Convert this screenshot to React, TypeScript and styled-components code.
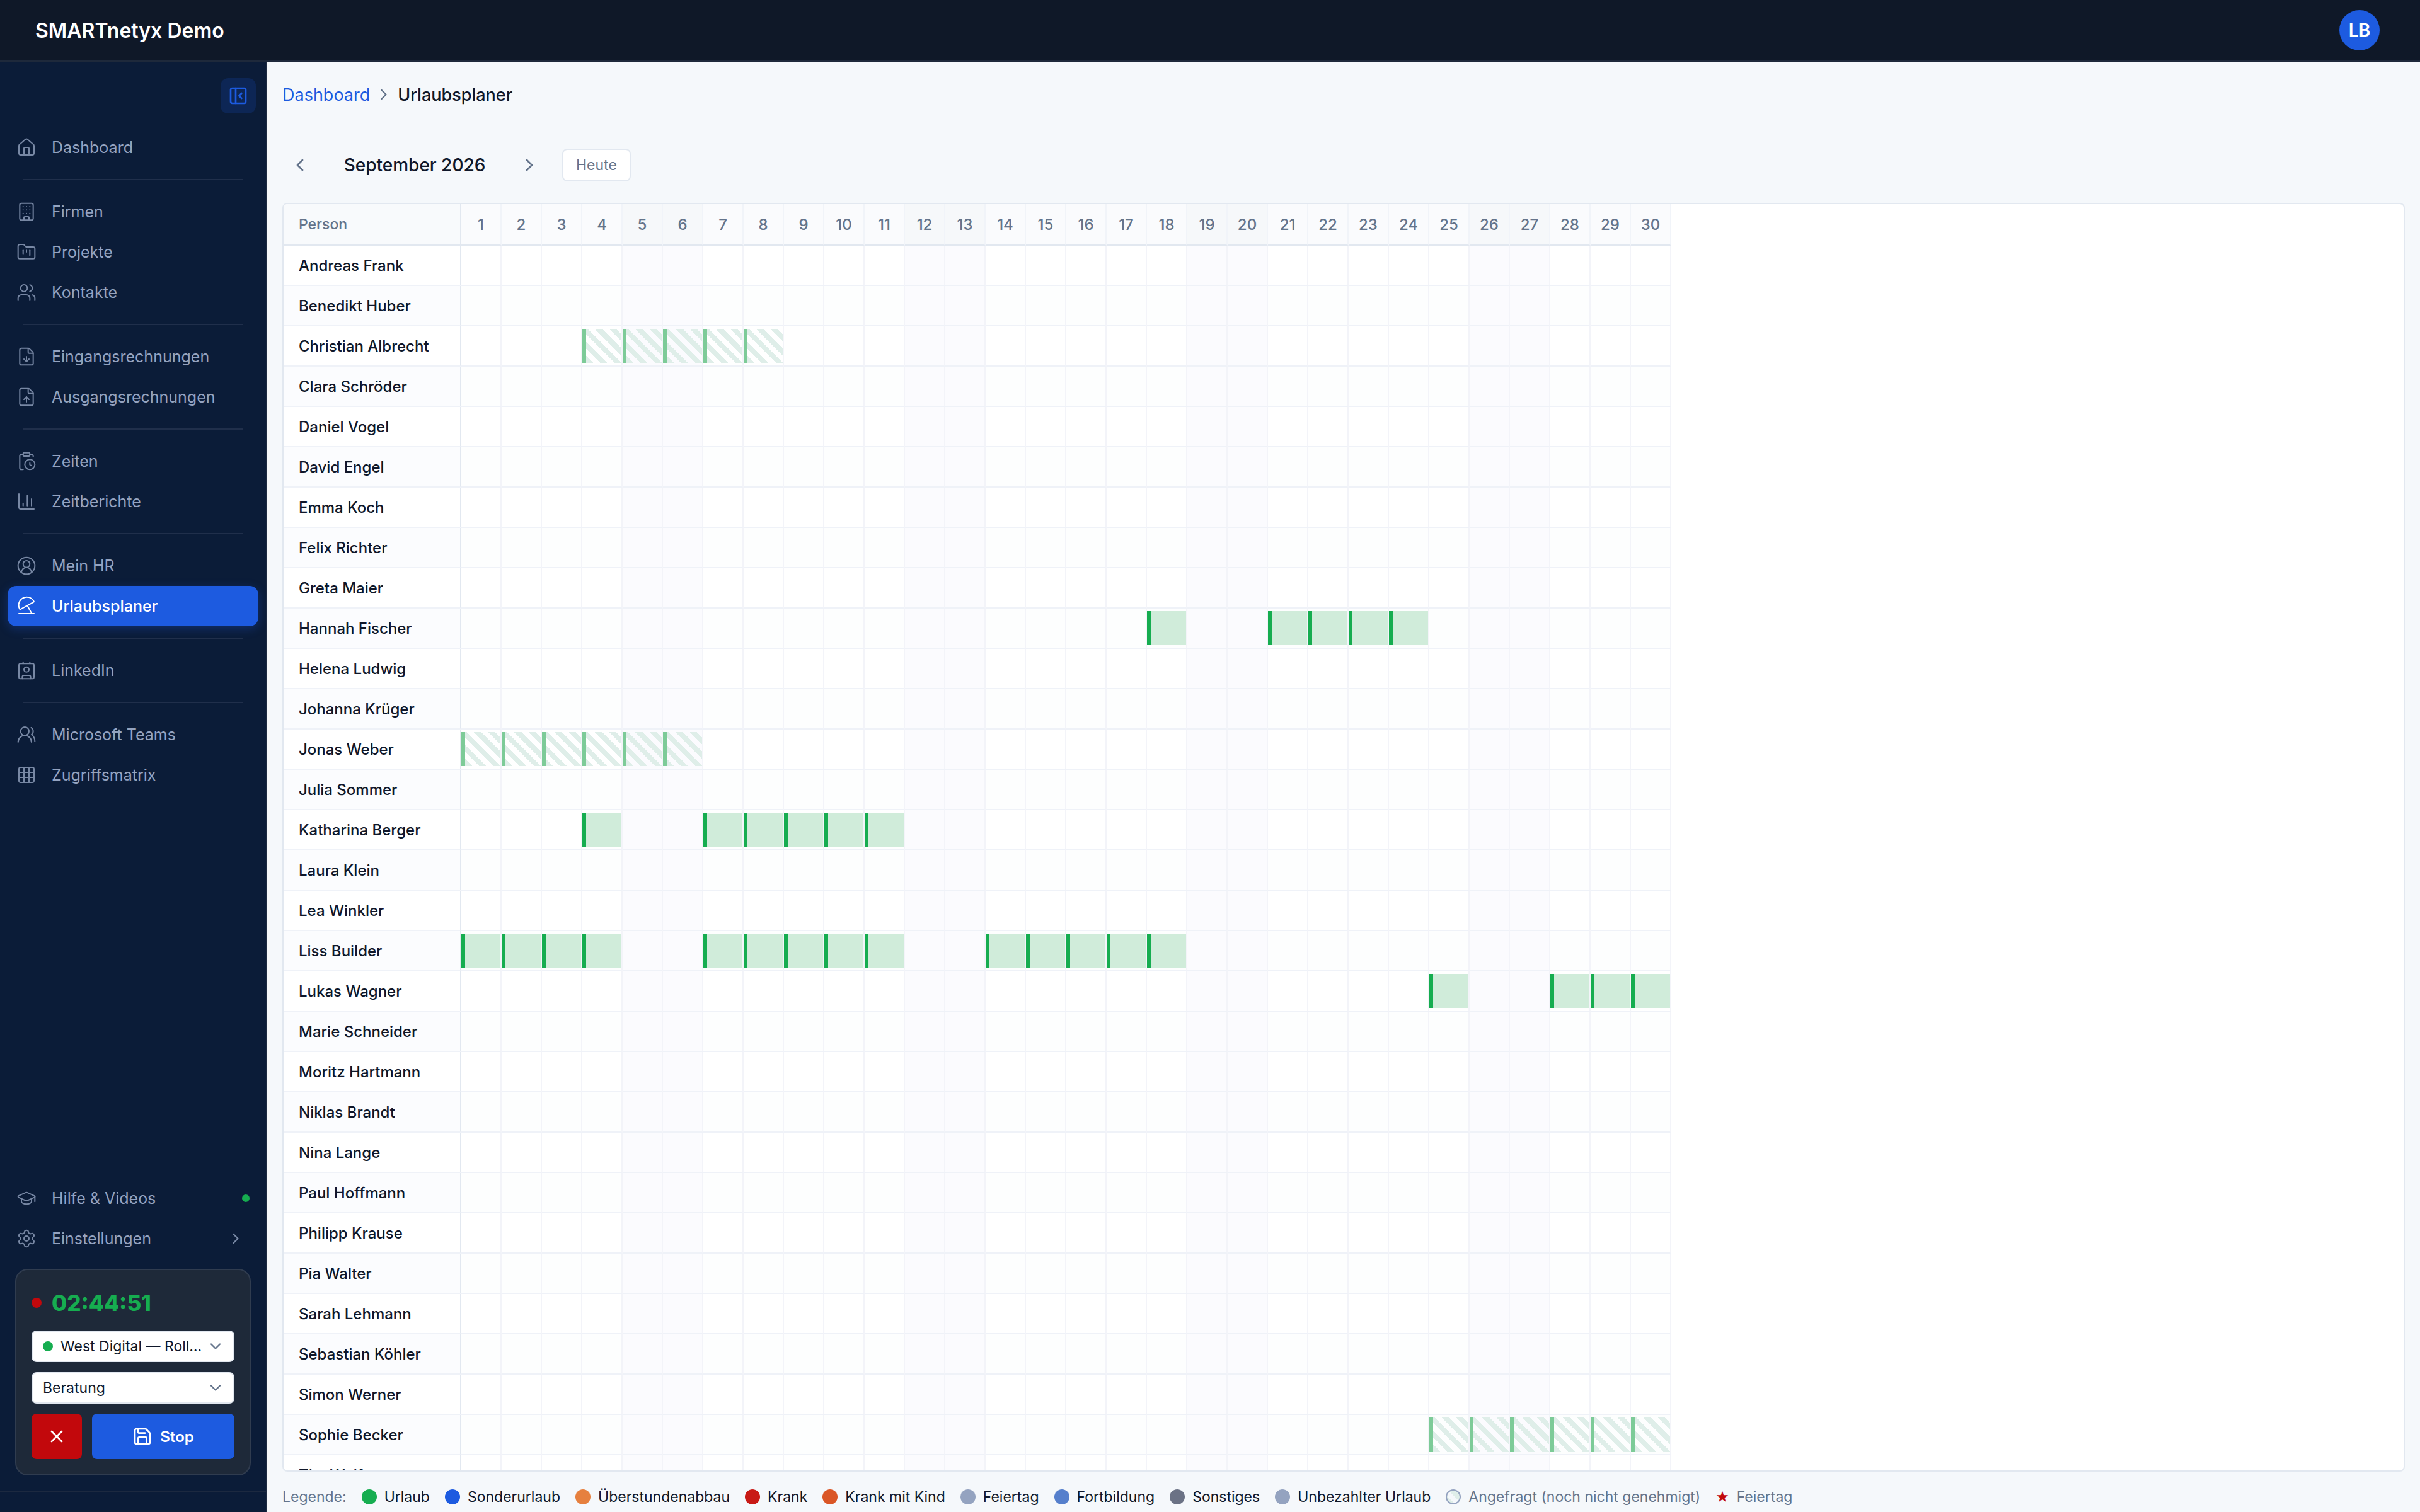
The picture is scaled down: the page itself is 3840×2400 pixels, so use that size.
import React from "react";
import styled, { createGlobalStyle, css } from "styled-components";
import {
  Building,
  ChartColumn,
  ChevronDown,
  ChevronLeft,
  ChevronRight,
  CircleUserRound,
  ClipboardClock,
  Contact,
  FileDown,
  FileUp,
  FolderKanban,
  GraduationCap,
  Grid3x3,
  House,
  PanelLeftClose,
  Save,
  Settings,
  Users,
  UsersRound,
  X,
} from "lucide-react";

const color = {
  ink: "#0f172a",
  muted: "#64748b",
  blue: "#1d5be0",
  green: "#16ad50",
  red: "#c2080c",
  page: "#f5f8fb",
  navy: "#0b1c38",
  header: "#0f1828",
  line: "#e2e8f0",
  sideText: "#94a3c0",
};

const GlobalStyle = createGlobalStyle`
  *, *::before, *::after { box-sizing: border-box; }
  body {
    margin: 0;
    font-family: Inter, "Liberation Sans", sans-serif;
    color: ${color.ink};
    background: ${color.page};
  }
  button, select { font: inherit; color: inherit; }
`;

const Shell = styled.div`
  display: flex;
  flex-direction: column;
  height: 100vh;
  overflow: hidden;
`;

const TopBar = styled.header`
  display: flex;
  align-items: center;
  justify-content: space-between;
  flex: none;
  height: 98px;
  padding: 0 64px 0 56px;
  background: ${color.header};
  border-bottom: 2px solid #1e293b;
`;

const Brand = styled.div`
  color: #fff;
  font-size: 32px;
  font-weight: 600;
`;

const Avatar = styled.button`
  width: 64px;
  height: 64px;
  padding: 0;
  border: 0;
  border-radius: 50%;
  background: ${color.blue};
  color: #fff;
  font-size: 28px;
  font-weight: 600;
`;

const Body = styled.div`
  display: flex;
  flex: 1;
  min-height: 0;
`;

const Sidebar = styled.aside`
  display: flex;
  flex-direction: column;
  flex: none;
  width: 424px;
  background: ${color.navy};
  border-right: 2px solid #1c2940;
`;

const SidebarTop = styled.div`
  display: flex;
  justify-content: flex-end;
  padding: 26px 16px 22px;
`;

const CollapseButton = styled.button`
  display: grid;
  place-items: center;
  width: 56px;
  height: 56px;
  padding: 0;
  border: 0;
  border-radius: 12px;
  background: #0d2655;
  color: ${color.blue};
`;

const Nav = styled.nav`
  flex: 1;
  padding: 0 12px;
`;

const NavGroup = styled.div`
  & + & {
    margin-top: 18px;
  }
  & + &::before {
    content: "";
    display: block;
    height: 2px;
    margin: 0 24px 18px;
    background: #202f4b;
  }
`;

const NavLink = styled.a<{ $active?: boolean }>`
  display: flex;
  align-items: center;
  gap: 24px;
  height: 64px;
  padding: 0 14px;
  border-radius: 14px;
  color: ${color.sideText};
  font-size: 25px;
  text-decoration: none;

  svg {
    flex: none;
    opacity: 0.8;
  }

  ${(p) =>
    p.$active &&
    css`
      background: ${color.blue};
      color: #fff;
      font-weight: 500;
      box-shadow: 0 4px 16px rgba(29, 91, 224, 0.3);
      svg {
        opacity: 1;
      }
    `}
`;

const NavLabel = styled.span`
  flex: 1;
`;

const NavChevron = styled(ChevronRight)`
  margin-right: 8px;
`;

const StatusDot = styled.span<{ $color: string; $size: number }>`
  flex: none;
  width: ${(p) => p.$size}px;
  height: ${(p) => p.$size}px;
  border-radius: 50%;
  background: ${(p) => p.$color};
`;

const NavBottom = styled.div`
  padding: 0 12px 16px;
`;

const TimerCard = styled.section`
  display: flex;
  flex-direction: column;
  gap: 16px;
  margin: 0 24px 24px;
  padding: 24px;
  border: 2px solid #303c4f;
  border-radius: 20px;
  background: #1e2939;
`;

const TimerHead = styled.div`
  display: flex;
  align-items: center;
  gap: 16px;
  height: 56px;
  color: ${color.green};
  font-size: 35px;
  font-weight: 800;
`;

const SelectBox = styled.label`
  display: flex;
  align-items: center;
  height: 50px;
  padding: 0 14px 0 16px;
  border: 2px solid ${color.line};
  border-radius: 8px;
  background: #fff;
  color: ${color.muted};

  svg {
    flex: none;
  }
`;

const Select = styled.select`
  flex: 1;
  min-width: 0;
  padding: 0;
  border: 0;
  outline: 0;
  appearance: none;
  background: transparent;
  color: ${color.ink};
  font-size: 23px;

  ${StatusDot} + & {
    margin-left: 12px;
  }
`;

const TimerActions = styled.div`
  display: flex;
  gap: 16px;
`;

const ActionButton = styled.button<{ $tone: string; $grow?: boolean }>`
  display: flex;
  align-items: center;
  justify-content: center;
  gap: 12px;
  flex: ${(p) => (p.$grow ? "1" : "0 0 80px")};
  height: 72px;
  padding: 0;
  border: 0;
  border-radius: 8px;
  background: ${(p) => p.$tone};
  color: #fff;
  font-size: 24px;
  font-weight: 600;
`;

const SidebarFoot = styled.div`
  height: 34px;
  border-top: 2px solid #1c2940;
`;

const Main = styled.main`
  display: flex;
  flex-direction: column;
  flex: 1;
  min-width: 0;
  padding: 32px 24px 8px;
`;

const Breadcrumb = styled.nav`
  display: flex;
  align-items: center;
  gap: 8px;
  height: 40px;
  font-size: 27px;
  font-weight: 500;

  a {
    color: ${color.blue};
    font-weight: 400;
    text-decoration: none;
  }
  svg {
    color: ${color.muted};
  }
`;

const Toolbar = styled.div`
  display: flex;
  align-items: center;
  gap: 24px;
  margin: 64px 0 32px;
`;

const ArrowButton = styled.button`
  display: grid;
  place-items: center;
  width: 56px;
  height: 56px;
  padding: 0;
  border: 0;
  background: transparent;
  color: ${color.muted};
`;

const Month = styled.h1`
  width: 260px;
  margin: 0;
  text-align: center;
  font-size: 28px;
  font-weight: 500;
`;

const TodayButton = styled.button`
  height: 52px;
  padding: 0 20px;
  border: 2px solid ${color.line};
  border-radius: 8px;
  background: #fff;
  color: ${color.muted};
  font-size: 23px;
`;

const Planner = styled.section`
  flex: 1;
  min-height: 0;
  overflow: hidden;
  border: 2px solid ${color.line};
  border-radius: 8px;
  background: #fff;
`;

const Table = styled.table`
  border-collapse: separate;
  border-spacing: 0;
  table-layout: fixed;
  width: 2202px;
  font-size: 24px;
`;

const PersonHead = styled.th`
  width: 282px;
  height: 66px;
  padding: 0 20px 0 24px;
  border-right: 2px solid ${color.line};
  border-bottom: 2px solid ${color.line};
  background: #f8fafc;
  color: ${color.muted};
  font-size: 23px;
  font-weight: 500;
  text-align: left;
`;

const DayHead = styled.th<{ $weekend: boolean }>`
  width: 64px;
  padding: 0;
  border-right: 2px solid #f1f4f9;
  border-bottom: 2px solid ${color.line};
  background: ${(p) => (p.$weekend ? "#f6f8fa" : "#fafbfd")};
  color: ${color.muted};
  font-weight: 500;
  text-align: center;
`;

const PersonCell = styled.th`
  height: 64px;
  padding: 0 20px 0 24px;
  border-right: 2px solid ${color.line};
  border-bottom: 2px solid #eff2f8;
  font-weight: 500;
  text-align: left;
  white-space: nowrap;
`;

const DayCell = styled.td<{ $weekend: boolean }>`
  padding: 4px 0;
  border-right: 2px solid #f3f4f9;
  border-bottom: 2px solid #eff2f8;
  background: ${(p) => (p.$weekend ? "#fbfbfe" : "transparent")};
`;

const Row = styled.tr`
  &:nth-child(even) {
    background: #fdfefe;
  }
  &:nth-child(even) ${PersonCell} {
    background: #fbfcfe;
  }
`;

const requestedStripes = css`
  background: repeating-linear-gradient(
    45deg,
    #dfeee9,
    #dfeee9 8px,
    transparent 8px,
    transparent 16px
  );
`;

const Absence = styled.div<{ $requested: boolean }>`
  height: 54px;
  border-left: 6px solid ${(p) => (p.$requested ? "#7dcb98" : color.green)};
  background: #d0ecda;
  ${(p) => p.$requested && requestedStripes}
`;

const Legend = styled.footer`
  display: flex;
  align-items: center;
  gap: 24px;
  height: 32px;
  margin-top: 24px;
  color: ${color.muted};
  font-size: 23px;
  white-space: nowrap;
`;

const LegendItem = styled.span<{ $muted?: boolean }>`
  display: flex;
  align-items: center;
  gap: 12px;
  color: ${(p) => (p.$muted ? color.muted : color.ink)};
`;

const RequestedDot = styled.span`
  width: 24px;
  height: 24px;
  border: 2px solid #94a3c0;
  border-radius: 50%;
  ${requestedStripes}
`;

const Star = styled.span`
  color: ${color.red};
  font-size: 24px;
  line-height: 24px;
  font-family: "DejaVu Sans", sans-serif;
`;

function BeachUmbrella({ size = 32, strokeWidth = 1.5 }) {
  return (
    <svg
      width={size}
      height={size}
      viewBox="0 0 24 24"
      fill="none"
      stroke="currentColor"
      strokeWidth={strokeWidth}
      strokeLinecap="round"
      strokeLinejoin="round"
      aria-hidden="true"
    >
      <path d="M20.7 6.2A9.5 9.5 0 0 0 3.9 15.5a.7.7 0 0 0 1 .3L20.5 7.3a.8.8 0 0 0 .2-1.1Z" />
      <path d="m13 11.5 5.2 9.3" />
      <path d="M3 21h18" />
    </svg>
  );
}

const navGroups = [
  [{ label: "Dashboard", icon: House }],
  [
    { label: "Firmen", icon: Building },
    { label: "Projekte", icon: FolderKanban },
    { label: "Kontakte", icon: Users },
  ],
  [
    { label: "Eingangsrechnungen", icon: FileDown },
    { label: "Ausgangsrechnungen", icon: FileUp },
  ],
  [
    { label: "Zeiten", icon: ClipboardClock },
    { label: "Zeitberichte", icon: ChartColumn },
  ],
  [
    { label: "Mein HR", icon: CircleUserRound },
    { label: "Urlaubsplaner", icon: BeachUmbrella },
  ],
  [{ label: "LinkedIn", icon: Contact }],
  [
    { label: "Microsoft Teams", icon: UsersRound },
    { label: "Zugriffsmatrix", icon: Grid3x3 },
  ],
];

type Span = { from: number; to: number; requested?: boolean };

const people: { name: string; spans?: Span[] }[] = [
  { name: "Andreas Frank" },
  { name: "Benedikt Huber" },
  { name: "Christian Albrecht", spans: [{ from: 4, to: 8, requested: true }] },
  { name: "Clara Schröder" },
  { name: "Daniel Vogel" },
  { name: "David Engel" },
  { name: "Emma Koch" },
  { name: "Felix Richter" },
  { name: "Greta Maier" },
  { name: "Hannah Fischer", spans: [{ from: 18, to: 18 }, { from: 21, to: 24 }] },
  { name: "Helena Ludwig" },
  { name: "Johanna Krüger" },
  { name: "Jonas Weber", spans: [{ from: 1, to: 6, requested: true }] },
  { name: "Julia Sommer" },
  { name: "Katharina Berger", spans: [{ from: 4, to: 4 }, { from: 7, to: 11 }] },
  { name: "Laura Klein" },
  { name: "Lea Winkler" },
  {
    name: "Liss Builder",
    spans: [{ from: 1, to: 4 }, { from: 7, to: 11 }, { from: 14, to: 18 }],
  },
  { name: "Lukas Wagner", spans: [{ from: 25, to: 25 }, { from: 28, to: 30 }] },
  { name: "Marie Schneider" },
  { name: "Moritz Hartmann" },
  { name: "Niklas Brandt" },
  { name: "Nina Lange" },
  { name: "Paul Hoffmann" },
  { name: "Philipp Krause" },
  { name: "Pia Walter" },
  { name: "Sarah Lehmann" },
  { name: "Sebastian Köhler" },
  { name: "Simon Werner" },
  { name: "Sophie Becker", spans: [{ from: 25, to: 30, requested: true }] },
  { name: "Tim Wolf" },
];

const days = Array.from({ length: 30 }, (_, i) => i + 1);
const isWeekend = (day: number) => day % 7 === 5 || day % 7 === 6;

const legend = [
  { label: "Urlaub", color: color.green },
  { label: "Sonderurlaub", color: color.blue },
  { label: "Überstundenabbau", color: "#e6803f" },
  { label: "Krank", color: "#c81a16" },
  { label: "Krank mit Kind", color: "#da5626" },
  { label: "Feiertag", color: "#94a3c0" },
  { label: "Fortbildung", color: "#557fcc" },
  { label: "Sonstiges", color: "#6b7285" },
  { label: "Unbezahlter Urlaub", color: "#94a3c0" },
];

export default function App() {
  return (
    <Shell>
      <GlobalStyle />
      <TopBar>
        <Brand>SMARTnetyx Demo</Brand>
        <Avatar type="button">LB</Avatar>
      </TopBar>
      <Body>
        <Sidebar>
          <SidebarTop>
            <CollapseButton type="button" aria-label="Seitenleiste einklappen">
              <PanelLeftClose size={32} />
            </CollapseButton>
          </SidebarTop>
          <Nav>
            {navGroups.map((group) => (
              <NavGroup key={group[0].label}>
                {group.map(({ label, icon: Icon }) => (
                  <NavLink key={label} href="#" $active={label === "Urlaubsplaner"}>
                    <Icon size={32} strokeWidth={1.5} />
                    <NavLabel>{label}</NavLabel>
                  </NavLink>
                ))}
              </NavGroup>
            ))}
          </Nav>
          <NavBottom>
            <NavLink href="#">
              <GraduationCap size={32} strokeWidth={1.5} />
              <NavLabel>Hilfe &amp; Videos</NavLabel>
              <StatusDot $color={color.green} $size={12} />
            </NavLink>
            <NavLink href="#">
              <Settings size={32} strokeWidth={1.5} />
              <NavLabel>Einstellungen</NavLabel>
              <NavChevron size={28} />
            </NavLink>
          </NavBottom>
          <TimerCard>
            <TimerHead>
              <StatusDot $color={color.red} $size={16} />
              02:44:51
            </TimerHead>
            <SelectBox>
              <StatusDot $color={color.green} $size={16} />
              <Select aria-label="Projekt">
                <option>West Digital — Roll…</option>
              </Select>
              <ChevronDown size={28} />
            </SelectBox>
            <SelectBox>
              <Select aria-label="Tätigkeit">
                <option>Beratung</option>
              </Select>
              <ChevronDown size={28} />
            </SelectBox>
            <TimerActions>
              <ActionButton type="button" $tone={color.red} aria-label="Verwerfen">
                <X size={32} />
              </ActionButton>
              <ActionButton type="button" $tone={color.blue} $grow>
                <Save size={32} />
                Stop
              </ActionButton>
            </TimerActions>
          </TimerCard>
          <SidebarFoot />
        </Sidebar>
        <Main>
          <Breadcrumb>
            <a href="#">Dashboard</a>
            <ChevronRight size={28} />
            <span>Urlaubsplaner</span>
          </Breadcrumb>
          <Toolbar>
            <ArrowButton type="button" aria-label="Vorheriger Monat">
              <ChevronLeft size={32} />
            </ArrowButton>
            <Month>September 2026</Month>
            <ArrowButton type="button" aria-label="Nächster Monat">
              <ChevronRight size={32} />
            </ArrowButton>
            <TodayButton type="button">Heute</TodayButton>
          </Toolbar>
          <Planner>
            <Table>
              <thead>
                <tr>
                  <PersonHead scope="col">Person</PersonHead>
                  {days.map((day) => (
                    <DayHead key={day} scope="col" $weekend={isWeekend(day)}>
                      {day}
                    </DayHead>
                  ))}
                </tr>
              </thead>
              <tbody>
                {people.map(({ name, spans = [] }) => (
                  <Row key={name}>
                    <PersonCell scope="row">{name}</PersonCell>
                    {days.map((day) => {
                      const span = spans.find((s) => day >= s.from && day <= s.to);
                      return (
                        <DayCell key={day} $weekend={isWeekend(day)}>
                          {span && <Absence $requested={!!span.requested} />}
                        </DayCell>
                      );
                    })}
                  </Row>
                ))}
              </tbody>
            </Table>
          </Planner>
          <Legend>
            <span>Legende:</span>
            {legend.map((item) => (
              <LegendItem key={item.label}>
                <StatusDot $color={item.color} $size={24} />
                {item.label}
              </LegendItem>
            ))}
            <LegendItem $muted>
              <RequestedDot />
              Angefragt (noch nicht genehmigt)
            </LegendItem>
            <LegendItem $muted>
              <Star>★</Star>
              Feiertag
            </LegendItem>
          </Legend>
        </Main>
      </Body>
    </Shell>
  );
}
